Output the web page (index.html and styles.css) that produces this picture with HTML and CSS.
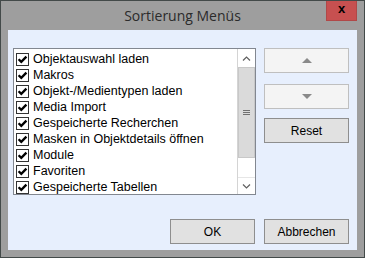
FILE: index.html
```html
<!DOCTYPE html>
<html lang="de">
<head>
<meta charset="utf-8">
<title>Sortierung Menüs</title>
<link rel="stylesheet" href="styles.css">
</head>
<body>
<div class="window">
  <div class="titlebar">
    <span class="tb-spacer"></span>
    <div class="title">Sortierung Menüs</div>
    <div class="close">x</div>
  </div>
  <div class="content">
    <div class="top">
      <div class="listbox">
        <ul class="items">
          <li class="item"><span class="cb"><svg viewBox="0 0 11 11" width="11" height="11"><path d="M1.6 5.2 L4.3 7.9 L9.4 2.6" fill="none" stroke="#000" stroke-width="2.3"/></svg></span><span class="label">Objektauswahl laden</span></li>
          <li class="item"><span class="cb"><svg viewBox="0 0 11 11" width="11" height="11"><path d="M1.6 5.2 L4.3 7.9 L9.4 2.6" fill="none" stroke="#000" stroke-width="2.3"/></svg></span><span class="label">Makros</span></li>
          <li class="item"><span class="cb"><svg viewBox="0 0 11 11" width="11" height="11"><path d="M1.6 5.2 L4.3 7.9 L9.4 2.6" fill="none" stroke="#000" stroke-width="2.3"/></svg></span><span class="label">Objekt-/Medientypen laden</span></li>
          <li class="item"><span class="cb"><svg viewBox="0 0 11 11" width="11" height="11"><path d="M1.6 5.2 L4.3 7.9 L9.4 2.6" fill="none" stroke="#000" stroke-width="2.3"/></svg></span><span class="label">Media Import</span></li>
          <li class="item"><span class="cb"><svg viewBox="0 0 11 11" width="11" height="11"><path d="M1.6 5.2 L4.3 7.9 L9.4 2.6" fill="none" stroke="#000" stroke-width="2.3"/></svg></span><span class="label">Gespeicherte Recherchen</span></li>
          <li class="item"><span class="cb"><svg viewBox="0 0 11 11" width="11" height="11"><path d="M1.6 5.2 L4.3 7.9 L9.4 2.6" fill="none" stroke="#000" stroke-width="2.3"/></svg></span><span class="label">Masken in Objektdetails öffnen</span></li>
          <li class="item"><span class="cb"><svg viewBox="0 0 11 11" width="11" height="11"><path d="M1.6 5.2 L4.3 7.9 L9.4 2.6" fill="none" stroke="#000" stroke-width="2.3"/></svg></span><span class="label">Module</span></li>
          <li class="item"><span class="cb"><svg viewBox="0 0 11 11" width="11" height="11"><path d="M1.6 5.2 L4.3 7.9 L9.4 2.6" fill="none" stroke="#000" stroke-width="2.3"/></svg></span><span class="label">Favoriten</span></li>
          <li class="item"><span class="cb"><svg viewBox="0 0 11 11" width="11" height="11"><path d="M1.6 5.2 L4.3 7.9 L9.4 2.6" fill="none" stroke="#000" stroke-width="2.3"/></svg></span><span class="label">Gespeicherte Tabellen</span></li>
        </ul>
        <div class="scrollbar">
          <div class="sb-btn sb-up"><svg viewBox="0 0 9 5" width="9" height="5"><path d="M1 4.5 L4.5 1 L8 4.5" fill="none" stroke="#606060" stroke-width="1.2"/></svg></div>
          <div class="thumb"><span class="grip"></span><span class="grip"></span><span class="grip"></span></div>
          <div class="track"></div>
          <div class="sb-btn sb-down"><svg viewBox="0 0 9 5" width="9" height="5"><path d="M1 0.5 L4.5 4 L8 0.5" fill="none" stroke="#606060" stroke-width="1.2"/></svg></div>
        </div>
      </div>
      <div class="side">
        <div class="btn btn-disabled"><svg viewBox="0 0 10 5" width="10" height="5"><path d="M0 5 L5 0 L10 5 Z" fill="#8a8a8a"/></svg></div>
        <div class="btn btn-disabled btn-down"><svg viewBox="0 0 10 5" width="10" height="5"><path d="M0 0 L5 5 L10 0 Z" fill="#8a8a8a"/></svg></div>
        <div class="btn btn-reset">Reset</div>
      </div>
    </div>
    <div class="bottom">
      <div class="btn btn-action">OK</div>
      <div class="btn btn-action">Abbrechen</div>
    </div>
  </div>
</div>
</body>
</html>
```
FILE: styles.css
```css
html, body {
  margin: 0;
  padding: 0;
  background: #9e9e9e;
}
.window {
  width: 365px;
  height: 258px;
  box-sizing: border-box;
  border: 1px solid #434a49;
  background: #9e9e9e;
  padding: 0 7px 7px 7px;
  display: flex;
  flex-direction: column;
}
.titlebar {
  height: 29px;
  display: grid;
  grid-template-columns: 1fr auto 1fr;
  align-items: start;
}
.title {
  font-family: "Open Sans", "Noto Sans", sans-serif;
  font-size: 14px;
  color: #2b2b2b;
  line-height: 29px;
  white-space: nowrap;
}
.close {
  justify-self: end;
  width: 31px;
  height: 20px;
  box-sizing: border-box;
  background: #c75050;
  border: 1px solid #b04848;
  border-top: none;
  color: #000;
  font-family: "Liberation Sans", Arial, sans-serif;
  font-weight: bold;
  font-size: 13px;
  line-height: 16px;
  text-align: center;
}
.content {
  height: 220px;
  box-sizing: border-box;
  background: #e7effd;
  padding: 18px 8px 6px 5px;
  display: flex;
  flex-direction: column;
  justify-content: space-between;
}
.top {
  display: flex;
  gap: 8px;
}
.listbox {
  width: 243px;
  height: 147px;
  box-sizing: border-box;
  border: 1px solid #828790;
  background: #fff;
  display: flex;
}
.items {
  flex: 1;
  list-style: none;
  margin: 0;
  padding: 2px 0 0 0;
  overflow: hidden;
}
.item {
  height: 16px;
  display: flex;
  align-items: center;
  gap: 4px;
  padding-left: 2px;
  font-family: "Liberation Sans", Arial, sans-serif;
  font-size: 12.5px;
  color: #000;
  white-space: nowrap;
}
.cb {
  width: 13px;
  height: 13px;
  box-sizing: border-box;
  border: 1px solid #333;
  background: #fff;
  display: flex;
  flex: none;
}
.cb svg {
  display: block;
}
.scrollbar {
  width: 18px;
  box-sizing: border-box;
  border-left: 1px solid #d4d4d4;
  background: #fff;
  display: flex;
  flex-direction: column;
}
.sb-btn {
  display: flex;
  align-items: center;
  justify-content: center;
}
.sb-up {
  height: 18px;
}
.sb-down {
  height: 17px;
  border-top: 1px solid #e6e6e6;
  box-sizing: border-box;
}
.sb-btn svg {
  display: block;
}
.thumb {
  height: 91px;
  box-sizing: border-box;
  background: #dadada;
  border: 1px solid #c8c8c8;
  display: flex;
  flex-direction: column;
  align-items: center;
  justify-content: center;
  gap: 1px;
}
.grip {
  width: 7px;
  height: 1px;
  background: #707070;
}
.track {
  flex: 1;
}
.side {
  width: 85px;
  display: flex;
  flex-direction: column;
}
.btn {
  height: 25px;
  box-sizing: border-box;
  display: flex;
  align-items: center;
  justify-content: center;
  font-family: "Liberation Sans", Arial, sans-serif;
  font-size: 12px;
  color: #000;
}
.btn-disabled {
  background: #f4f4f4;
  border: 1px solid #bfbfbf;
}
.btn-down {
  margin-top: 11px;
}
.btn-reset {
  margin-top: 9px;
  background: #e1e1e1;
  border: 1px solid #8e8e8e;
}
.bottom {
  display: flex;
  justify-content: flex-end;
  gap: 9px;
}
.btn-action {
  width: 85px;
  background: #e1e1e1;
  border: 1px solid #8e8e8e;
}
```
